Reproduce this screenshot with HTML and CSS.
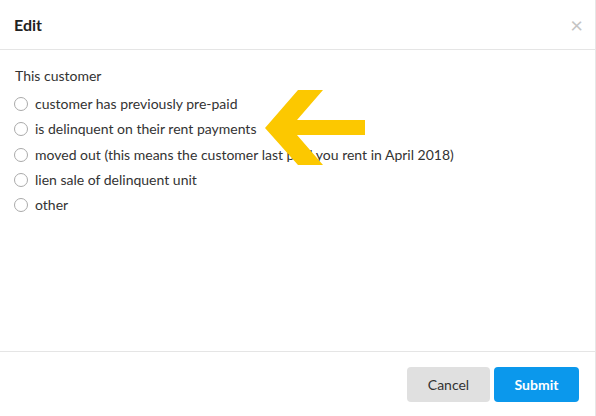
FILE: index.html
```html
<!DOCTYPE html>
<html lang="en">
<head>
  <meta charset="UTF-8" />
  <title>Edit</title>
  <link rel="stylesheet" href="styles.css">
</head>
<body>
  <div class="modal">
    <div class="modal-header">
      <h3>Edit</h3>
      <span class="close">&times;</span>
    </div>

    <div class="modal-body">
      <p class="lead">This customer</p>
      <ul class="options">
        <li><span class="radio"></span>customer has previously pre-paid</li>
        <li><span class="radio"></span>is delinquent on their rent payments</li>
        <li><span class="radio"></span>moved out (this means the customer last paid you rent in April 2018)</li>
        <li><span class="radio"></span>lien sale of delinquent unit</li>
        <li><span class="radio"></span>other</li>
      </ul>

      <!-- annotation arrow -->
      <svg class="arrow" width="110" height="80" viewBox="260 88 110 80">
        <polygon points="265,128 298,90 323,90 297,120 365,120 365,135 297,135 323,165 298,165" fill="#fcc800" />
      </svg>
    </div>

    <div class="modal-footer">
      <button class="btn btn-cancel">Cancel</button>
      <button class="btn btn-submit">Submit</button>
    </div>
  </div>
</body>
</html>
```

FILE: styles.css
```css
body {
  font-family: Lato, "Open Sans", sans-serif;
  background: white;
  margin: 0;
  padding: 0;
  color: #333;
}

.modal {
  width: 596px;
  height: 416px;
  border-right: 1px solid #e6e6e6;
  box-sizing: border-box;
  display: flex;
  flex-direction: column;
}

.modal-header {
  height: 50px;
  box-sizing: border-box;
  padding: 0 14px;
  border-bottom: 1px solid #e5e5e5;
  display: flex;
  align-items: center;
  justify-content: space-between;
}

.modal-header h3 {
  margin: 0;
  font-size: 16px;
  font-weight: bold;
  color: #222;
}

.close {
  font-size: 22px;
  color: #c4c4c4;
  line-height: 1;
  margin-right: -2px;
}

.modal-body {
  flex: 1;
  position: relative;
  padding: 17px 15px 0;
}

.lead {
  margin: 0 0 6px;
  font-size: 14px;
  line-height: 18px;
}

.options {
  list-style: none;
  margin: 0;
  padding: 0;
}

.options li {
  display: flex;
  align-items: center;
  height: 25.3px;
  font-size: 14px;
}

.radio {
  width: 12px;
  height: 12px;
  border: 1px solid #aaa;
  border-radius: 50%;
  margin: 1px 7px 0 -1px;
  flex-shrink: 0;
}

.arrow {
  position: absolute;
  left: 260px;
  top: 38px;
}

.modal-footer {
  height: 65px;
  box-sizing: border-box;
  border-top: 1px solid #e5e5e5;
  padding: 15px 16px 0;
  display: flex;
  justify-content: flex-end;
  align-items: flex-start;
  gap: 4px;
}

.btn {
  height: 35px;
  border: none;
  border-radius: 4px;
  font-family: Lato, sans-serif;
  font-size: 14px;
  cursor: pointer;
}

.btn-cancel {
  width: 83px;
  background: #e0e0e0;
  color: #333;
}

.btn-submit {
  width: 85px;
  background: #0b98ec;
  color: white;
  font-weight: bold;
}
```
